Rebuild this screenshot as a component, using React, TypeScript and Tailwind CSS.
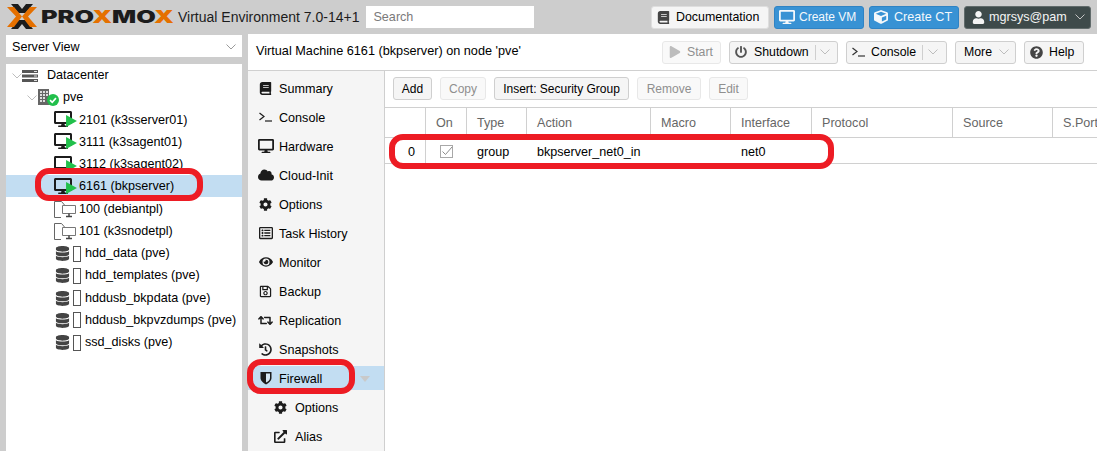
import type { ReactNode } from "react";
import {
  FaBook,
  FaCloud,
  FaCog,
  FaCube,
  FaDatabase,
  FaDesktop,
  FaExternalLinkAlt,
  FaEye,
  FaHistory,
  FaPlay,
  FaPowerOff,
  FaQuestionCircle,
  FaRegListAlt,
  FaRegSave,
  FaRetweet,
  FaUser,
} from "react-icons/fa";

function Chevron({ className = "text-[#9a9a9a]" }: { className?: string }) {
  return (
    <svg className={`h-[6px] w-[10px] shrink-0 ${className}`} fill="none" stroke="currentColor" strokeWidth="1" viewBox="0 0 10 6">
      <path d="M0.5 0.5 L5 5 L9.5 0.5" />
    </svg>
  );
}

function Logo() {
  return (
    <svg className="ml-[7px] h-[26px] w-[168px] shrink-0" viewBox="0 0 168 26">
      <path d="M4 0 H11 L15 5 L19 0 H26 L18.5 9 H11.5 Z M11.5 16 H18.5 L26 25 H19 L15 20 L11 25 H4 Z" fill="#1c1c1c" />
      <path d="M0 3 H7 L15 12.5 L7 23 H0 L9 12.5 Z M30 3 H23 L15 12.5 L23 23 H30 L21 12.5 Z" fill="#e57000" />
      <text fontFamily="Inter, sans-serif" fontSize="17" fontWeight="900" lengthAdjust="spacingAndGlyphs" textLength="133" x="34" y="19">
        <tspan fill="#1c1c1c">PRO</tspan>
        <tspan fill="#e57000">X</tspan>
        <tspan fill="#1c1c1c">MO</tspan>
        <tspan fill="#e57000">X</tspan>
      </text>
    </svg>
  );
}

function ConsoleIcon() {
  return (
    <svg className="shrink-0" fill="none" height="10" stroke="currentColor" strokeWidth="1.2" viewBox="0 0 13 10" width="13">
      <path d="M0.5 1 L5 4.5 L0.5 8" />
      <path d="M6 9 H13" />
    </svg>
  );
}

function ShieldIcon() {
  return (
    <svg height="14" viewBox="0 0 12 14" width="12">
      <path d="M0.5 1 H11.5 V7 C11.5 10 8 12.5 6 13.5 C4 12.5 0.5 10 0.5 7 Z" fill="#1c1c1c" />
      <path d="M6 2.5 H10 V7 C10 9 8 10.5 6 11.5 Z" fill="#d6e6f2" />
    </svg>
  );
}

function HeaderButton({ icon, label, width, blue }: { icon: ReactNode; label: string; width: string; blue?: boolean }) {
  return (
    <div
      className={`flex h-[23px] items-center rounded-[3px] border ${width} ${
        blue ? "border-[#2f83c4] bg-[#3892d4] pl-[4px] text-[#f4f8fb]" : "border-[#dedede] bg-[#f5f5f5] pl-[5px] text-black"
      }`}
    >
      {icon}
      <span>{label}</span>
    </div>
  );
}

function ToolButton({ children, width, disabled }: { children: ReactNode; width: string; disabled?: boolean }) {
  return (
    <div
      className={`flex h-[23px] shrink-0 items-center rounded-[3px] border ${width} ${
        disabled ? "border-[#e8e8e8] bg-[#f9f9f9] text-[#8f8f8f]" : "border-[#cfcfcf] bg-[#f5f5f5] text-black"
      }`}
    >
      {children}
    </div>
  );
}

function DatacenterIcon() {
  return (
    <svg className="shrink-0" height="12" viewBox="0 0 16 12" width="16">
      <path d="M0 0 H16 V3 H0 Z M0 4.5 H16 V7.5 H0 Z M0 9 H16 V12 H0 Z" fill="#555" />
      <path d="M12 1 H15 V2 H12 Z M12 5.5 H15 V6.5 H12 Z M12 10 H15 V11 H12 Z" fill="#ddd" />
    </svg>
  );
}

function VmIcon() {
  return (
    <span className="relative h-[16px] w-[22px] shrink-0">
      <FaDesktop className="absolute left-0 top-[-2px] text-[#1c1c1c]" size={18} />
      <svg className="absolute left-[12px] top-[3px]" height="12" viewBox="0 0 10 11" width="11">
        <path d="M0 0 L10 5.5 L0 11 Z" fill="#21c04b" />
      </svg>
    </span>
  );
}

function TemplateIcon() {
  return (
    <span className="relative h-[17px] w-[22px] shrink-0">
      <svg className="absolute left-0 top-0" fill="none" height="17" viewBox="0 0 22 17" width="22">
        <path d="M0.5 16.5 V0.5 H7.5 L10.5 4 M0.5 16.5 H7" stroke="#666" strokeWidth="1" />
        <path d="M8.5 4.5 H21.5 V12.5 H8.5 Z" fill="#fff" stroke="#777" strokeWidth="1" />
        <path d="M12 15.5 H18 M15 12.5 V15.5" stroke="#444" strokeWidth="1.5" />
      </svg>
    </span>
  );
}

function StorageIcon() {
  return (
    <span className="flex w-[26px] shrink-0 items-center gap-[3px]">
      <FaDatabase className="shrink-0 text-[#444]" size={15} />
      <span className="h-[16px] w-[8px] shrink-0 border border-[#555] bg-white" />
    </span>
  );
}

function NodeIcon() {
  return (
    <span className="relative h-[17px] w-[20px] shrink-0">
      <svg className="absolute left-0 top-0" height="16" viewBox="0 0 12 16" width="12">
        <path d="M0 0 H11 V16 H0 Z" fill="#666" />
        <path d="M2 2 H4 V4 H2 Z M5 2 H7 V4 H5 Z M8 2 H10 V4 H8 Z M2 5 H4 V7 H2 Z M5 5 H7 V7 H5 Z M8 5 H10 V7 H8 Z M2 8 H4 V10 H2 Z M5 8 H7 V10 H5 Z M2 11 H4 V13 H2 Z M5 11 H7 V13 H5 Z" fill="#ddd" />
      </svg>
      <svg className="absolute left-[9px] top-[5px]" height="12" viewBox="0 0 11 11" width="12">
        <circle cx="5.5" cy="5.5" fill="#21bf4b" r="5.5" />
        <path d="M2.8 5.6 L4.8 7.6 L8.2 3.8" fill="none" stroke="#fff" strokeWidth="1.5" />
      </svg>
    </span>
  );
}

const vms = [
  { label: "2101 (k3sserver01)" },
  { label: "3111 (k3sagent01)" },
  { label: "3112 (k3sagent02)" },
  { label: "6161 (bkpserver)", selected: true },
];

const storages = ["hdd_data (pve)", "hdd_templates (pve)", "hddusb_bkpdata (pve)", "hddusb_bkpvzdumps (pve)", "ssd_disks (pve)"];

function TreeRow({ children, indent, selected }: { children: ReactNode; indent: string; selected?: boolean }) {
  return (
    <div className={`flex h-[22.25px] items-center whitespace-nowrap pt-[2px] ${indent} ${selected ? "bg-[#c2ddf2]" : ""}`}>{children}</div>
  );
}

function ResourceTree() {
  return (
    <div className="mt-[6.5px] flex-1 bg-white">
      <TreeRow indent="pl-[6px]">
        <span className="w-[10px]"><Chevron className="text-[#bdbdbd]" /></span>
        <DatacenterIcon />
        <span className="ml-[9px]">Datacenter</span>
      </TreeRow>
      <TreeRow indent="pl-[21px]">
        <span className="w-[11px]"><Chevron className="text-[#bdbdbd]" /></span>
        <NodeIcon />
        <span className="ml-[5px]">pve</span>
      </TreeRow>
      {vms.map((vm) => (
        <TreeRow indent="pl-[48px]" key={vm.label} selected={vm.selected}>
          <VmIcon />
          <span className="ml-[3px]">{vm.label}</span>
        </TreeRow>
      ))}
      {["100 (debiantpl)", "101 (k3snodetpl)"].map((label) => (
        <TreeRow indent="pl-[48px]" key={label}>
          <TemplateIcon />
          <span className="ml-[3px]">{label}</span>
        </TreeRow>
      ))}
      {storages.map((label) => (
        <TreeRow indent="pl-[49px]" key={label}>
          <StorageIcon />
          <span className="ml-[4px]">{label}</span>
        </TreeRow>
      ))}
    </div>
  );
}

const navItems: { label: string; icon: ReactNode; active?: boolean; sub?: boolean }[] = [
  { label: "Summary", icon: <FaBook size={13} /> },
  { label: "Console", icon: <ConsoleIcon /> },
  { label: "Hardware", icon: <FaDesktop size={16} /> },
  { label: "Cloud-Init", icon: <FaCloud size={16} /> },
  { label: "Options", icon: <FaCog size={13} /> },
  { label: "Task History", icon: <FaRegListAlt size={14} /> },
  { label: "Monitor", icon: <FaEye size={14} /> },
  { label: "Backup", icon: <FaRegSave size={13} /> },
  { label: "Replication", icon: <FaRetweet size={15} /> },
  { label: "Snapshots", icon: <FaHistory size={13} /> },
  { label: "Firewall", icon: <ShieldIcon />, active: true },
  { label: "Options", icon: <FaCog size={13} />, sub: true },
  { label: "Alias", icon: <FaExternalLinkAlt size={13} />, sub: true },
];

function SideNav() {
  return (
    <nav className="flex w-[137px] shrink-0 flex-col gap-[5px] border-r border-[#cfcfcf] bg-[#f5f5f5] pt-[5px]">
      {navItems.map((item, index) => (
        <div className={`relative flex h-[24px] shrink-0 items-center ${item.active ? "bg-[#c2ddf2]" : ""} ${item.sub ? "pl-[19px]" : "pl-[4px]"}`} key={index}>
          <span className="flex w-[27px] shrink-0 items-center justify-center text-[#1c1c1c]">{item.icon}</span>
          <span className={`pt-[2px] ${item.sub ? "ml-[1px]" : "ml-0"}`}>{item.label}</span>
          {item.active ? <span className="absolute right-[14px] top-[10px] h-0 w-0 border-x-[5px] border-t-[6px] border-x-transparent border-t-[#c9c9c9]" /> : null}
        </div>
      ))}
    </nav>
  );
}

const columns = [
  { label: "", width: "w-[41px]" },
  { label: "On", width: "w-[41px]" },
  { label: "Type", width: "w-[60px]" },
  { label: "Action", width: "w-[124px]" },
  { label: "Macro", width: "w-[80px]" },
  { label: "Interface", width: "w-[81px]" },
  { label: "Protocol", width: "w-[141px]" },
  { label: "Source", width: "w-[100px]" },
  { label: "S.Port", width: "w-[100px]" },
];

function RulesGrid() {
  return (
    <div className="min-w-0 flex-1 overflow-hidden bg-white">
      <div className="flex h-[36px] items-start gap-[8px] pl-[8px] pt-[6px] text-[12px]">
        <ToolButton width="w-[39px] justify-center">Add</ToolButton>
        <ToolButton disabled width="w-[46px] justify-center">Copy</ToolButton>
        <ToolButton width="w-[135px] justify-center">Insert: Security Group</ToolButton>
        <ToolButton disabled width="w-[64px] justify-center">Remove</ToolButton>
        <ToolButton disabled width="w-[39px] justify-center">Edit</ToolButton>
      </div>
      <div className="flex h-[31px] border-y border-[#d0d0d0] text-[#666]">
        {columns.map((column) => (
          <div className={`flex shrink-0 items-center border-r border-[#d0d0d0] pl-[10px] pt-[2px] ${column.width}`} key={column.label}>
            {column.label}
          </div>
        ))}
      </div>
      <div className="flex h-[26px] items-center border-b border-[#d0d0d0] text-black">
        <div className="flex h-full w-[41px] shrink-0 items-center justify-end border-r border-[#d0d0d0] pr-[10px] pt-[3px]">0</div>
        <div className="flex h-full w-[41px] shrink-0 items-center justify-center pt-[2px]">
          <svg height="13" viewBox="0 0 13 13" width="13">
            <rect fill="#fff" height="12" stroke="#a8a8a8" width="12" x="0.5" y="0.5" />
            <path d="M2.5 6.5 L5.5 9.5 L12 2" fill="none" stroke="#8c8c8c" strokeWidth="1" />
          </svg>
        </div>
        <div className="w-[60px] shrink-0 pl-[10px] pt-[3px]">group</div>
        <div className="w-[124px] shrink-0 whitespace-nowrap pl-[10px] pt-[3px]">bkpserver_net0_in</div>
        <div className="w-[80px] shrink-0" />
        <div className="w-[81px] shrink-0 pl-[10px] pt-[3px]">net0</div>
      </div>
    </div>
  );
}

function Highlight({ className }: { className: string }) {
  return <div className={`pointer-events-none absolute rounded-[14px] border-[6px] border-[#ed1c24] ${className}`} />;
}

export default function App() {
  return (
    <div className="relative flex h-[451px] w-[1097px] flex-col overflow-hidden bg-[#cdcdcd] font-['Liberation_Sans',Arial,sans-serif] text-[12.6px] text-black">
      <header className="flex h-[34px] shrink-0 items-center">
        <Logo />
        <span className="ml-[3px] whitespace-nowrap text-[14px] text-[#1c1c1c]">Virtual Environment 7.0-14+1</span>
        <div className="ml-[7px] flex h-[22px] w-[168px] items-center bg-white pl-[7px] text-[#7a7a7a]">Search</div>
        <div className="ml-auto flex items-center gap-[5px] pr-[6px]">
          <HeaderButton icon={<FaBook className="mr-[6px] text-[#444]" size={13} />} label="Documentation" width="w-[118px] text-[12.4px]" />
          <HeaderButton blue icon={<FaDesktop className="mr-[4px]" size={16} />} label="Create VM" width="w-[90px] text-[12px]" />
          <HeaderButton blue icon={<FaCube className="mr-[6px]" size={14} />} label="Create CT" width="w-[90px]" />
          <div className="flex h-[23px] w-[127px] items-center rounded-[3px] border border-[#616b6b] bg-[#3e4a4a] pl-[7px] text-[#f4f4f4]">
            <FaUser size={13} />
            <span className="ml-[4px]">mgrsys@pam</span>
            <Chevron className="ml-auto mr-[5px] text-[#c4c4c4]" />
          </div>
        </div>
      </header>

      <div className="flex min-h-0 flex-1">
        <aside className="ml-[6px] flex w-[236px] shrink-0 flex-col">
          <div className="mt-[1px] flex h-[22px] shrink-0 items-center justify-between bg-white pl-[6px] pr-[6px] pt-[2px]">
            <span>Server View</span>
            <Chevron />
          </div>
          <ResourceTree />
        </aside>

        <main className="ml-[6px] flex min-w-0 flex-1 flex-col">
          <div className="flex h-[37px] shrink-0 items-center border-b border-[#d0d0d0] bg-white pl-[8px] pr-[13px] text-[12.3px]">
            <span className="whitespace-nowrap text-[12.7px]">Virtual Machine 6161 (bkpserver) on node 'pve'</span>
            <div className="ml-auto flex items-center gap-[8px]">
              <ToolButton disabled width="w-[59px] gap-[6px] pl-[6px]">
                <FaPlay className="text-[#bdbdbd]" size={12} />
                <span>Start</span>
              </ToolButton>
              <ToolButton width="w-[109px] pl-[5px]">
                <FaPowerOff className="text-[#555]" size={12} />
                <span className="ml-[7px]">Shutdown</span>
                <span className="ml-[6px] h-[15px] border-l border-[#cfcfcf]" />
                <Chevron className="ml-[4px] text-[#bdbdbd]" />
              </ToolButton>
              <ToolButton width="w-[101px] pl-[5px]">
                <span className="text-[#333]"><ConsoleIcon /></span>
                <span className="ml-[6px]">Console</span>
                <span className="ml-[6px] h-[15px] border-l border-[#cfcfcf]" />
                <Chevron className="ml-[5px] text-[#bdbdbd]" />
              </ToolButton>
              <ToolButton width="w-[61px] pl-[8px]">
                <span>More</span>
                <Chevron className="ml-[7px] text-[#bdbdbd]" />
              </ToolButton>
              <ToolButton width="w-[60px] pl-[5px]">
                <FaQuestionCircle className="text-[#444]" size={13} />
                <span className="ml-[6px]">Help</span>
              </ToolButton>
            </div>
          </div>
          <div className="flex min-h-0 flex-1">
            <SideNav />
            <RulesGrid />
          </div>
        </main>
      </div>

      <Highlight className="left-[35px] top-[168px] h-[33px] w-[168px]" />
      <Highlight className="left-[247px] top-[359px] h-[35px] w-[108px]" />
      <Highlight className="left-[389px] top-[134px] h-[35px] w-[445px]" />
    </div>
  );
}
